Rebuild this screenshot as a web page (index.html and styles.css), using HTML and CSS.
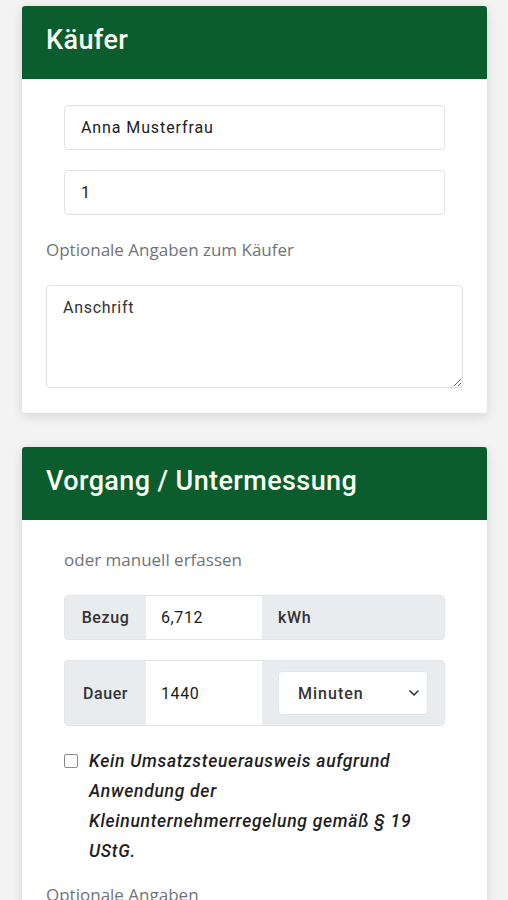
FILE: index.html
```html
<!DOCTYPE html>
<html lang="de">
<head>
<meta charset="utf-8">
<title>Käufer</title>
<link rel="stylesheet" href="styles.css">
</head>
<body>
<main class="page">
  <section class="card">
    <header class="card-head"><h2 class="card-title">Käufer</h2></header>
    <div class="card-body">
      <div class="indent">
        <input class="control" type="text" value="Anna Musterfrau">
        <input class="control" type="text" value="1">
      </div>
      <p class="hint hint-first">Optionale Angaben zum Käufer</p>
      <textarea class="control area">Anschrift</textarea>
    </div>
  </section>

  <section class="card">
    <header class="card-head"><h2 class="card-title">Vorgang / Untermessung</h2></header>
    <div class="card-body body-two">
      <div class="indent">
        <p class="hint hint-manual">oder manuell erfassen</p>
        <div class="group">
          <span class="addon addon-pre">Bezug</span>
          <input class="group-input" type="text" value="6,712">
          <span class="addon addon-post">kWh</span>
        </div>
        <div class="group group-tall">
          <span class="addon addon-pre">Dauer</span>
          <input class="group-input" type="text" value="1440">
          <span class="addon addon-post addon-select">
            <span class="select-wrap">
              <select class="select">
                <option>Minuten</option>
                <option>Stunden</option>
              </select>
              <svg class="chev" width="10" height="6" viewBox="0 0 10 6"><path d="M1 1l4 4 4-4" fill="none" stroke="#333" stroke-width="1.6" stroke-linecap="round" stroke-linejoin="round"/></svg>
            </span>
          </span>
        </div>
        <label class="check">
          <input class="check-box" type="checkbox">
          <span class="check-text">Kein Umsatzsteuerausweis aufgrund<br>Anwendung der<br>Kleinunternehmerregelung gemäß § 19<br>UStG.</span>
        </label>
      </div>
      <p class="hint hint-last">Optionale Angaben</p>
    </div>
  </section>
</main>
</body>
</html>
```

FILE: styles.css
```css
* { box-sizing: border-box; }

html, body {
  margin: 0;
  padding: 0;
  background: #f3f3f3;
}

body {
  font-family: Roboto, "Liberation Sans", sans-serif;
  color: #222;
}

.page {
  padding: 6px 21px 40px 22px;
  display: flex;
  flex-direction: column;
  gap: 34px;
}

.card {
  background: #fff;
  border-radius: 3px;
  box-shadow: 0 3px 12px rgba(0, 0, 0, 0.13);
}

.card-head {
  background: #0b5d2d;
  height: 73px;
  border-radius: 3px 3px 0 0;
  display: flex;
  align-items: center;
  padding: 0 24px 6px;
}

.card-title {
  margin: 0;
  color: #fbfbf3;
  font-family: Roboto, "Liberation Sans", sans-serif;
  font-weight: 500;
  font-size: 27px;
  letter-spacing: 0.4px;
}

.card-body {
  padding: 26px 24px 25px;
}

.body-two {
  padding-top: 28px;
}

.indent {
  padding: 0 18px;
  display: flex;
  flex-direction: column;
}

.control {
  display: block;
  width: 100%;
  height: 45px;
  border: 1px solid #dfe2e5;
  border-radius: 4px;
  padding: 0 16px;
  font-family: Roboto, "Liberation Sans", sans-serif;
  font-size: 16px;
  letter-spacing: 0.9px;
  color: #1c1c1c;
  background: #fff;
  outline: none;
}

.indent .control + .control {
  margin-top: 20px;
}

.hint {
  margin: 0;
  font-family: "Open Sans", "Liberation Sans", sans-serif;
  font-size: 17px;
  line-height: 24px;
  color: #6f7479;
}

.hint-first {
  margin-top: 23px;
  margin-bottom: 23px;
}

.area {
  height: 103px;
  padding: 12px 16px;
  font-size: 16px;
  letter-spacing: 0.7px;
  line-height: 20px;
  resize: vertical;
  color: #333;
}

.hint-manual {
  margin-bottom: 23px;
}

.group {
  display: flex;
  height: 45px;
  border: 1px solid #e2e5e8;
  border-radius: 4px;
  overflow: hidden;
  background: #e9ecef;
}

.group + .group {
  margin-top: 20px;
}

.group-tall {
  height: 66px;
}

.addon {
  display: flex;
  align-items: center;
  font-size: 16px;
  font-weight: 500;
  letter-spacing: 0.6px;
  color: #333;
  background: #e9ecef;
}

.addon-pre {
  width: 81px;
  justify-content: center;
  flex: none;
}

.addon-post {
  flex: 1;
  padding: 0 16px;
}

.addon-select {
  padding: 0 16px;
}

.group-input {
  width: 116px;
  flex: none;
  border: none;
  padding: 0 15px;
  font-family: Roboto, "Liberation Sans", sans-serif;
  font-size: 16px;
  letter-spacing: 0.6px;
  color: #1c1c1c;
  background: #fff;
  outline: none;
}

.select-wrap {
  position: relative;
  display: block;
  width: 100%;
}

.select {
  display: block;
  width: 100%;
  height: 44px;
  appearance: none;
  -webkit-appearance: none;
  border: 1px solid #e3e6e9;
  border-radius: 4px;
  background: #fff;
  padding: 0 30px 0 19px;
  font-family: Roboto, "Liberation Sans", sans-serif;
  font-size: 16px;
  font-weight: 500;
  letter-spacing: 1px;
  color: #333;
  outline: none;
}

.chev {
  position: absolute;
  right: 9px;
  top: 19px;
  pointer-events: none;
}

.check {
  display: flex;
  align-items: flex-start;
  margin-top: 20px;
}

.check-box {
  flex: none;
  width: 14px;
  height: 14px;
  margin: 8px 11px 0 0;
  appearance: none;
  -webkit-appearance: none;
  border: 1px solid #8a8a8a;
  border-radius: 2px;
  background: #fff;
}

.check-text {
  font-family: Roboto, "Liberation Sans", sans-serif;
  font-style: italic;
  font-weight: 500;
  font-size: 17.5px;
  letter-spacing: 0.7px;
  line-height: 30px;
  color: #1e1e1e;
}

.hint-last {
  margin-top: 17px;
}
```
